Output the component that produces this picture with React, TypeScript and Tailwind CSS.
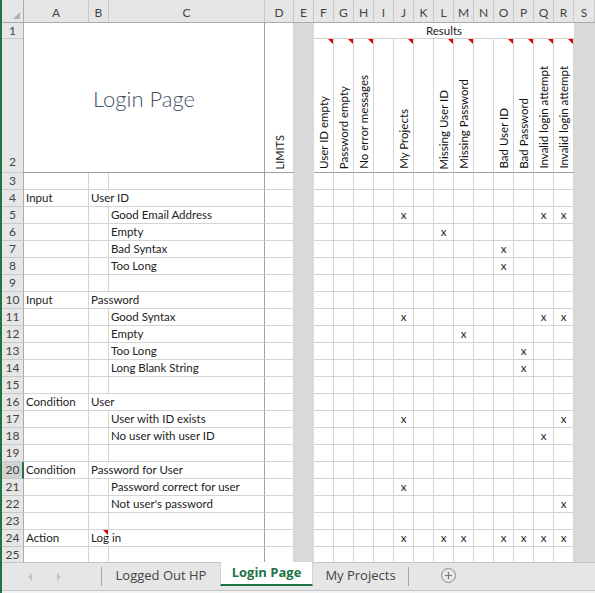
import React from "react";

type Row = { n: number; a?: string; b?: string; c?: string; x?: string; note?: boolean };

const resultCols = ["F", "G", "H", "I", "J", "K", "L", "M", "N", "O", "P", "Q", "R"];

const colHeads: [string, string][] = [
  ["A", "w-[65px]"],
  ["B", "w-[20px]"],
  ["C", "w-[156px]"],
  ["D", "w-[29px]"],
  ["E", "w-[20px]"],
  ...resultCols.map((l) => [l, "w-[20px]"] as [string, string]),
  ["S", "w-[21px]"],
];

// row 2 headings, one per result column (F..R)
const results = [
  "User ID empty",
  "Password empty",
  "No error messages",
  "",
  "My Projects",
  "",
  "Missing User ID",
  "Missing Password",
  "",
  "Bad User ID",
  "Bad Password",
  "Invalid login attempt",
  "Invalid login attempt",
];

const rows: Row[] = [
  { n: 3 },
  { n: 4, a: "Input", b: "User ID" },
  { n: 5, c: "Good Email Address", x: "JQR" },
  { n: 6, c: "Empty", x: "L" },
  { n: 7, c: "Bad Syntax", x: "O" },
  { n: 8, c: "Too Long", x: "O" },
  { n: 9 },
  { n: 10, a: "Input", b: "Password" },
  { n: 11, c: "Good Syntax", x: "JQR" },
  { n: 12, c: "Empty", x: "M" },
  { n: 13, c: "Too Long", x: "P" },
  { n: 14, c: "Long Blank String", x: "P" },
  { n: 15 },
  { n: 16, a: "Condition", b: "User" },
  { n: 17, c: "User with ID exists", x: "JR" },
  { n: 18, c: "No user with user ID", x: "Q" },
  { n: 19 },
  { n: 20, a: "Condition", b: "Password for User" },
  { n: 21, c: "Password correct for user", x: "J" },
  { n: 22, c: "Not user's password", x: "R" },
  { n: 23 },
  { n: 24, a: "Action", b: "Log in", note: true, x: "JLMOPQR" },
  { n: 25 },
];

function CommentMark() {
  return <div className="h-0 w-0 border-t-[5px] border-l-[5px] border-t-[#e00000] border-l-transparent" />;
}

function ColumnHeader() {
  return (
    <div className="flex h-[23px] border-b border-[#ababab] bg-[#e6e6e6] text-[12px] text-[#444]">
      <div className="flex w-[22px] shrink-0 items-end justify-end border-r border-[#ababab] pr-[3px] pb-[3px]">
        <div className="h-0 w-0 border-b-[7px] border-l-[7px] border-b-[#b4b4b4] border-l-transparent" />
      </div>
      {colHeads.map(([l, w]) => (
        <div
          key={l}
          className={`${w} flex shrink-0 items-end justify-center border-r border-[#c8c8c8] pb-[3px] leading-none`}
        >
          {l}
        </div>
      ))}
    </div>
  );
}

function TopBlock() {
  return (
    <div className="flex h-[150px]">
      <div className="flex w-[22px] shrink-0 flex-col border-r border-[#ababab] bg-[#e6e6e6] text-[12px] text-[#444]">
        <div className="flex h-[16px] items-center justify-center border-b border-[#c8c8c8]">1</div>
        <div className="flex h-[134px] items-end justify-center border-b border-[#c8c8c8] pb-[1px]">2</div>
      </div>
      <div className="flex w-[241px] shrink-0 items-center justify-center border-r border-b border-[#a0a0a0] pt-[2px] text-[22px] font-light text-[#44546a]">
        Login Page
      </div>
      <div className="flex w-[29px] shrink-0 items-end justify-center border-r border-b border-r-[#d4d4d4] border-b-[#a0a0a0] pb-[3px]">
        <span className="rotate-180 whitespace-nowrap text-[11px] leading-none [writing-mode:vertical-rl]">LIMITS</span>
      </div>
      <div className="w-[20px] shrink-0 bg-[#d9d9d9]" />
      <div className="flex w-[260px] shrink-0 flex-col">
        <div className="flex h-[16px] items-center justify-center border-b border-[#d4d4d4] text-[11.5px]">Results</div>
        <div className="flex h-[134px]">
          {results.map((t, i) => (
            <div
              key={i}
              className="flex w-[20px] shrink-0 flex-col items-center justify-between border-r border-b border-r-[#d4d4d4] border-b-[#a0a0a0] pb-[3px]"
            >
              {t ? (
                <div className="self-end">
                  <CommentMark />
                </div>
              ) : (
                <div />
              )}
              <span className="rotate-180 whitespace-nowrap text-[11.5px] leading-none text-[#111] [writing-mode:vertical-rl]">
                {t}
              </span>
            </div>
          ))}
        </div>
      </div>
      <div className="w-[21px] shrink-0 bg-[#d9d9d9]" />
    </div>
  );
}

function BodyRow({ row }: { row: Row }) {
  const selected = row.n === 20;
  const marks = row.x ?? "";
  return (
    <div className="flex h-[17px] text-[11.5px] leading-none">
      {selected ? (
        <div className="flex w-[22px] shrink-0 items-center justify-center border-r-2 border-b border-r-[#217346] border-b-[#c8c8c8] bg-[#d2d2d2] pl-[1px] text-[12px] text-[#444]">
          {row.n}
        </div>
      ) : (
        <div className="flex w-[22px] shrink-0 items-center justify-center border-r border-b border-r-[#ababab] border-b-[#c8c8c8] bg-[#e6e6e6] text-[12px] text-[#444]">
          {row.n}
        </div>
      )}
      <div className="flex w-[65px] shrink-0 items-center border-r border-b border-[#d4d4d4] pl-[2px]">{row.a}</div>
      {row.b ? (
        <div className="relative flex w-[176px] shrink-0 items-center border-r border-b border-r-[#a0a0a0] border-b-[#d4d4d4] pl-[2px]">
          {row.b}
          {row.note && (
            <div className="absolute top-0 left-[14px]">
              <CommentMark />
            </div>
          )}
        </div>
      ) : (
        <>
          <div className="w-[20px] shrink-0 border-r border-b border-[#d4d4d4]" />
          <div className="flex w-[156px] shrink-0 items-center border-r border-b border-r-[#a0a0a0] border-b-[#d4d4d4] pl-[2px]">
            {row.c}
          </div>
        </>
      )}
      <div className="w-[29px] shrink-0 border-r border-b border-[#d4d4d4]" />
      <div className="w-[20px] shrink-0 bg-[#d9d9d9]" />
      {resultCols.map((l) => (
        <div key={l} className="flex w-[20px] shrink-0 items-center justify-center border-r border-b border-[#d4d4d4]">
          {marks.includes(l) ? "x" : ""}
        </div>
      ))}
      <div className="w-[21px] shrink-0 bg-[#d9d9d9]" />
    </div>
  );
}

function SheetTabs() {
  return (
    <div className="h-[31px] bg-[#f3f3f3] font-['Open_Sans',sans-serif] text-[13px]">
      <div className="flex h-[29px] items-start border-y border-[#c6c6c6] bg-[#e6e6e6]">
        <div className="flex h-full w-[99px] shrink-0 items-center gap-[25px] pl-[26px]">
          <span className="h-0 w-0 border-y-[4px] border-r-[4px] border-y-transparent border-r-[#c3c3c3]" />
          <span className="h-0 w-0 border-y-[4px] border-l-[4px] border-y-transparent border-l-[#c3c3c3]" />
        </div>
        <div className="mt-[4px] h-[19px] w-px shrink-0 bg-[#a6a6a6]" />
        <div className="flex h-[26px] w-[118px] shrink-0 items-center justify-center text-[#444]">Logged Out HP</div>
        <div className="-mt-px flex h-[24px] w-[93px] shrink-0 items-center justify-center border-x border-b-2 border-x-[#d0d0d0] border-b-[#217346] bg-white font-bold text-[#217346]">
          Login Page
        </div>
        <div className="flex h-[26px] w-[95px] shrink-0 items-center justify-center text-[#444]">My Projects</div>
        <div className="mt-[4px] h-[19px] w-px shrink-0 bg-[#a6a6a6]" />
        <div className="mt-[5px] ml-[32px] flex h-[15px] w-[15px] shrink-0 items-center justify-center rounded-full border border-[#8c8c8c]">
          <svg width="9" height="9" viewBox="0 0 9 9">
            <path d="M4.5 1v7M1 4.5h7" stroke="#7a7a7a" strokeWidth="1.2" />
          </svg>
        </div>
      </div>
    </div>
  );
}

export default function App() {
  return (
    <div className="flex h-[593px] w-[595px] overflow-hidden bg-white font-['Lato',sans-serif] text-[#222]">
      <div className="w-[2px] shrink-0 bg-[#217346]" />
      <div className="flex w-[593px] flex-col">
        <div className="h-[562px] overflow-hidden">
          <ColumnHeader />
          <TopBlock />
          {rows.map((r) => (
            <BodyRow key={r.n} row={r} />
          ))}
        </div>
        <SheetTabs />
      </div>
    </div>
  );
}
